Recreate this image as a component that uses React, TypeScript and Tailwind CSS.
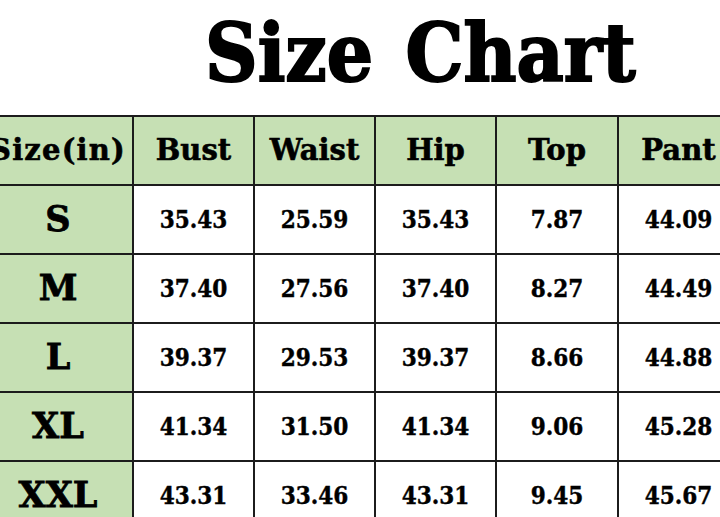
import React from "react";

const headers = ["Size(in)", "Bust", "Waist", "Hip", "Top", "Pant"];
const rows: [string, string, string, string, string, string][] = [
  ["S", "35.43", "25.59", "35.43", "7.87", "44.09"],
  ["M", "37.40", "27.56", "37.40", "8.27", "44.49"],
  ["L", "39.37", "29.53", "39.37", "8.66", "44.88"],
  ["XL", "41.34", "31.50", "41.34", "9.06", "45.28"],
  ["XXL", "43.31", "33.46", "43.31", "9.45", "45.67"],
];

const cond = {
  fontFamily: '"DejaVu Serif Condensed", "DejaVu Serif", serif',
};
const wide = {
  fontFamily: '"DejaVu Serif", serif',
};

export default function App() {
  return (
    <div className="w-[720px] h-[517px] overflow-hidden bg-white text-black">
      <div className="h-[115px] pl-[205px] pt-[12px]" style={cond}>
        <h1 className="text-[81px] leading-none font-bold font-stretch-condensed whitespace-nowrap [word-spacing:7px] [-webkit-text-stroke:2px_black]">
          Size Chart
        </h1>
      </div>
      <table className="ml-[-18px] border-collapse table-fixed w-[756px] font-bold">
        <colgroup>
          <col className="w-[150px]" />
          <col className="w-[121px]" />
          <col className="w-[121px]" />
          <col className="w-[121px]" />
          <col className="w-[122px]" />
          <col className="w-[121px]" />
        </colgroup>
        <thead>
          <tr className="h-[69px]">
            {headers.map((h, i) => (
              <th
                key={h}
                style={wide}
                className={
                  i === 0
                    ? "border-2 border-[#1c1c1c] bg-[#c6e0b4] text-[29px] tracking-[1.2px] text-center align-middle p-0 whitespace-nowrap [-webkit-text-stroke:0.6px_black]"
                    : "border-2 border-[#1c1c1c] bg-[#c6e0b4] text-[29px] text-center align-middle p-0 whitespace-nowrap [-webkit-text-stroke:0.6px_black]"
                }
              >
                {h}
              </th>
            ))}
          </tr>
        </thead>
        <tbody>
          {rows.map((r) => (
            <tr key={r[0]} className="h-[69px]">
              {r.map((c, i) => (
                <td
                  key={i}
                  style={i === 0 ? wide : cond}
                  className={
                    i === 0
                      ? "border-2 border-[#1c1c1c] bg-[#c6e0b4] text-[35px] text-center align-middle p-0 [-webkit-text-stroke:0.8px_black]"
                      : "border-2 border-[#1c1c1c] bg-white text-[24px] font-stretch-condensed text-center align-middle p-0 [-webkit-text-stroke:0.4px_black]"
                  }
                >
                  {c}
                </td>
              ))}
            </tr>
          ))}
        </tbody>
      </table>
    </div>
  );
}
